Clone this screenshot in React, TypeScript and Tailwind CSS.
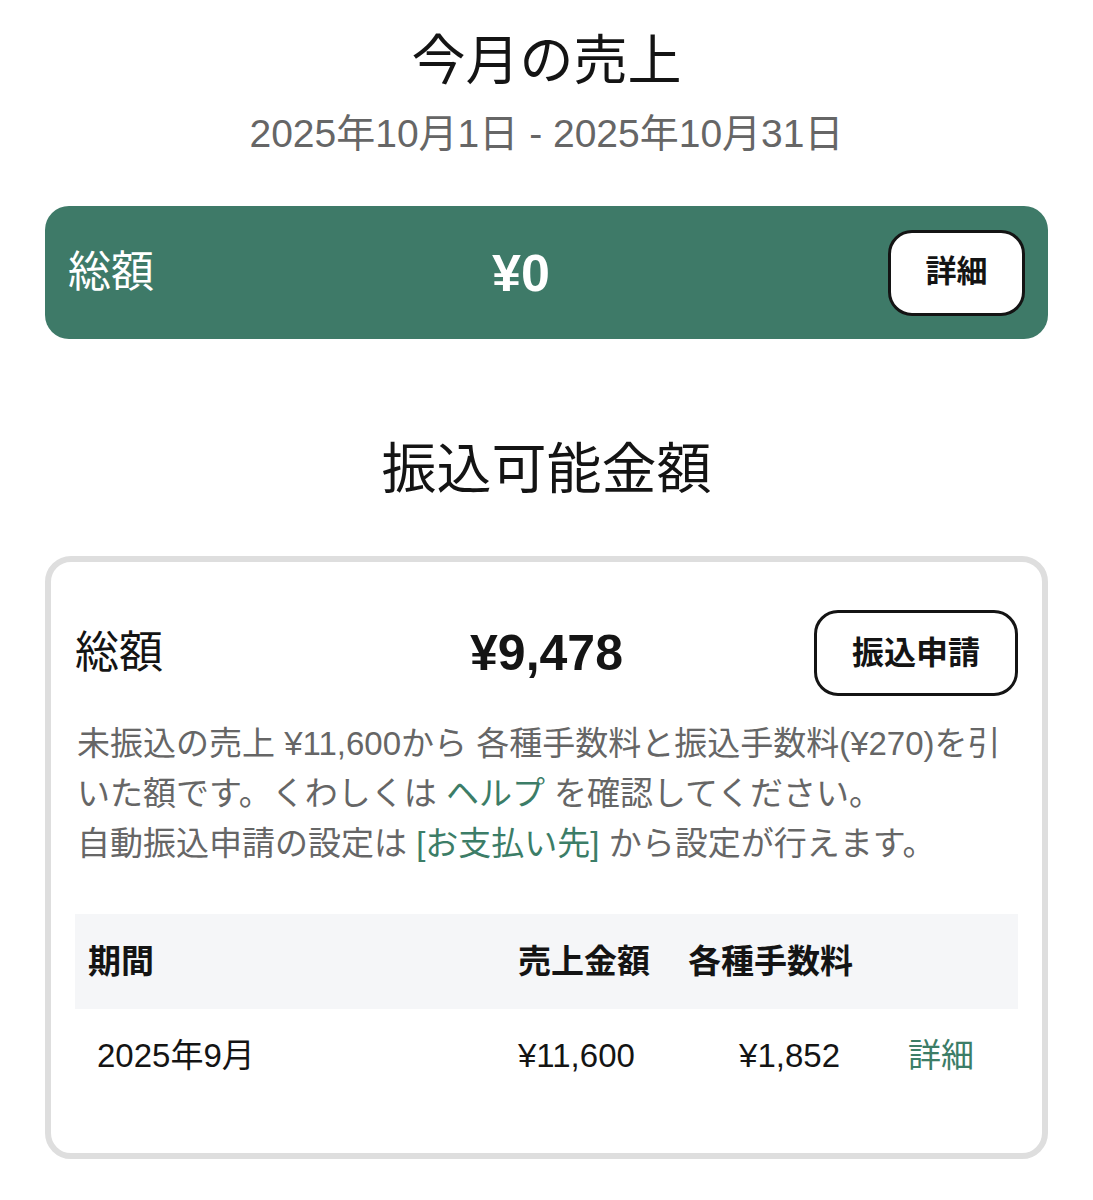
const FONT = "font-['Liberation_Sans','Noto_Sans_CJK_JP',sans-serif]";

export default function App() {
  return (
    <div className={`${FONT} min-h-[1200px] w-full bg-white pt-[26px] text-[#141414]`}>
      {/* ── 今月の売上 ── */}
      <h1 className="text-center text-[54px] font-normal leading-[70px]">今月の売上</h1>
      <p className="mt-[13px] text-center text-[39px] leading-[50px] text-[#666666]">2025年10月1日 - 2025年10月31日</p>

      <div className="mx-[45px] mt-[47px] flex h-[133px] items-center justify-between rounded-[24px] bg-[#3e7a68] px-[23px] text-white">
        <span className="text-[43px] leading-none">総額</span>
        <span className="text-[52px] font-bold leading-none">¥0</span>
        <button className="flex h-[86px] w-[137px] items-center justify-center rounded-[24px] border-[3px] border-[#141414] bg-white text-[31px] font-bold text-[#141414]">
          詳細
        </button>
      </div>

      {/* ── 振込可能金額 ── */}
      <h2 className="mt-[90px] text-center text-[55px] font-normal leading-[80px]">振込可能金額</h2>

      <div className="mx-[45px] mt-[47px] rounded-[26px] border-[6px] border-[#dedede] px-[24px] pb-[50px] pt-[48px]">
        <div className="grid grid-cols-[1fr_auto_1fr] items-center">
          <span className="text-[44px] leading-none">総額</span>
          <span className="text-[50px] font-bold leading-none">¥9,478</span>
          <button className="flex h-[86px] w-[204px] items-center justify-center justify-self-end rounded-[24px] border-[3px] border-[#141414] bg-white text-[32px] font-bold">
            振込申請
          </button>
        </div>

        <p className="mt-[23px] pl-[2px] text-[33px] leading-[50px] text-[#666666]">
          未振込の売上 ¥11,600から 各種手数料と振込手数料(¥270)を引
          <br />
          いた額です。くわしくは <span className="text-[#3c7d67]">ヘルプ</span> を確認してください。
          <br />
          自動振込申請の設定は <span className="text-[#3c7d67]">[お支払い先]</span> から設定が行えます。
        </p>

        <div className="mt-[45px]">
          <div className="grid h-[95px] grid-cols-[443px_170px_190px_139px] items-center bg-[#f5f6f8] text-[33px] font-bold">
            <span className="pl-[13px]">期間</span>
            <span>売上金額</span>
            <span>各種手数料</span>
            <span />
          </div>
          <div className="grid h-[94px] grid-cols-[443px_170px_190px_139px] items-center text-[33px]">
            <span className="pl-[22px]">2025年9月</span>
            <span>¥11,600</span>
            <span className="pr-[38px] text-right">¥1,852</span>
            <span className="pl-[30px] text-[#3c7d67]">詳細</span>
          </div>
        </div>
      </div>
    </div>
  );
}
